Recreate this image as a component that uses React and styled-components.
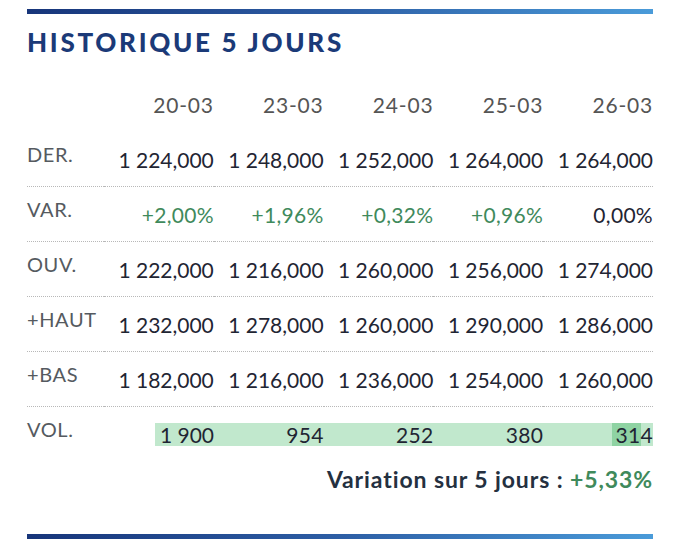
import React from "react";
import styled, { createGlobalStyle } from "styled-components";

const Global = createGlobalStyle`
  html, body { margin: 0; padding: 0; background: #fff; }
  body { font-family: Lato, "Noto Sans", sans-serif; }
`;

const Page = styled.div`
  width: 626px;
  padding: 9px 27px 0 27px;
`;

const Rule = styled.div`
  height: 5px;
  background: linear-gradient(90deg, #17357a 0%, #2d5ea5 50%, #4a9bd9 100%);
`;

const Title = styled.h1`
  margin: 12px 0 0 0;
  font-size: 26px;
  line-height: 32px;
  font-weight: 900;
  color: #1b3a78;
  letter-spacing: 2.7px;
`;

const Grid = styled.div`
  display: grid;
  grid-template-columns: 77px repeat(5, 1fr);
  margin-top: 35px;
`;

const HeadCell = styled.div`
  text-align: right;
  font-size: 21px;
  line-height: 24px;
  letter-spacing: 0.8px;
  color: #555;
  padding-bottom: 15px;
`;

const Row = styled.div`
  display: contents;
`;

const Label = styled.div`
  font-size: 20px;
  letter-spacing: 0.6px;
  color: #555a60;
  height: 55px;
  box-sizing: border-box;
  padding-top: 10px;
  line-height: 24px;
  border-bottom: ${(p) => (p.$last ? "none" : "1px dotted #b8b8b8")};
`;

const Cell = styled.div`
  height: 55px;
  box-sizing: border-box;
  display: flex;
  align-items: center;
  justify-content: flex-end;
  font-size: 21px;
  letter-spacing: 0.3px;
  color: ${(p) => (p.$green ? "#3f8a5c" : "#1f2533")};
  border-bottom: ${(p) => (p.$last ? "none" : "1px dotted #b8b8b8")};
`;

const VolWrap = styled.div`
  grid-column: 2 / span 5;
  height: 55px;
  display: flex;
  align-items: center;
  padding-left: 51px;
`;

const VolBar = styled.div`
  flex: 1;
  height: 23px;
  display: grid;
  grid-template-columns: 59px repeat(4, 1fr);
  background: linear-gradient(
    90deg,
    #c1e8cd 0,
    #c1e8cd 457px,
    #8fd3a3 457px,
    #8fd3a3 486px,
    #c1e8cd 486px
  );
`;

const VolCell = styled.div`
  text-align: right;
  font-size: 21px;
  letter-spacing: 0.3px;
  line-height: 23px;
  color: #1f2533;
`;

const Summary = styled.div`
  text-align: right;
  font-size: 23px;
  letter-spacing: 0.9px;
  font-weight: 700;
  color: #243040;
  margin-top: 5px;
  line-height: 24px;
`;

const Up = styled.span`
  color: #3f8a5c;
`;

const BottomRule = styled(Rule)`
  margin-top: 43px;
`;

const dates = ["20-03", "23-03", "24-03", "25-03", "26-03"];
const rows = [
  { label: "DER.", values: ["1\u202f224,000", "1\u202f248,000", "1\u202f252,000", "1\u202f264,000", "1\u202f264,000"] },
  { label: "VAR.", values: ["+2,00%", "+1,96%", "+0,32%", "+0,96%", "0,00%"], green: [true, true, true, true, false] },
  { label: "OUV.", values: ["1\u202f222,000", "1\u202f216,000", "1\u202f260,000", "1\u202f256,000", "1\u202f274,000"] },
  { label: "+HAUT", values: ["1\u202f232,000", "1\u202f278,000", "1\u202f260,000", "1\u202f290,000", "1\u202f286,000"] },
  { label: "+BAS", values: ["1\u202f182,000", "1\u202f216,000", "1\u202f236,000", "1\u202f254,000", "1\u202f260,000"] },
];
const vols = ["1\u202f900", "954", "252", "380", "314"];

export default function App() {
  return (
    <>
      <Global />
      <Page>
        <Rule />
        <Title>HISTORIQUE 5 JOURS</Title>
        <Grid>
          <div />
          {dates.map((d) => (
            <HeadCell key={d}>{d}</HeadCell>
          ))}
          {rows.map((r) => (
            <Row key={r.label}>
              <Label>{r.label}</Label>
              {r.values.map((v, i) => (
                <Cell key={i} $green={r.green && r.green[i]}>
                  {v}
                </Cell>
              ))}
            </Row>
          ))}
          <Label $last>VOL.</Label>
          <VolWrap>
            <VolBar>
              {vols.map((v, i) => (
                <VolCell key={i}>{v}</VolCell>
              ))}
            </VolBar>
          </VolWrap>
        </Grid>
        <Summary>
          Variation sur 5 jours : <Up>+5,33%</Up>
        </Summary>
        <BottomRule />
      </Page>
    </>
  );
}
